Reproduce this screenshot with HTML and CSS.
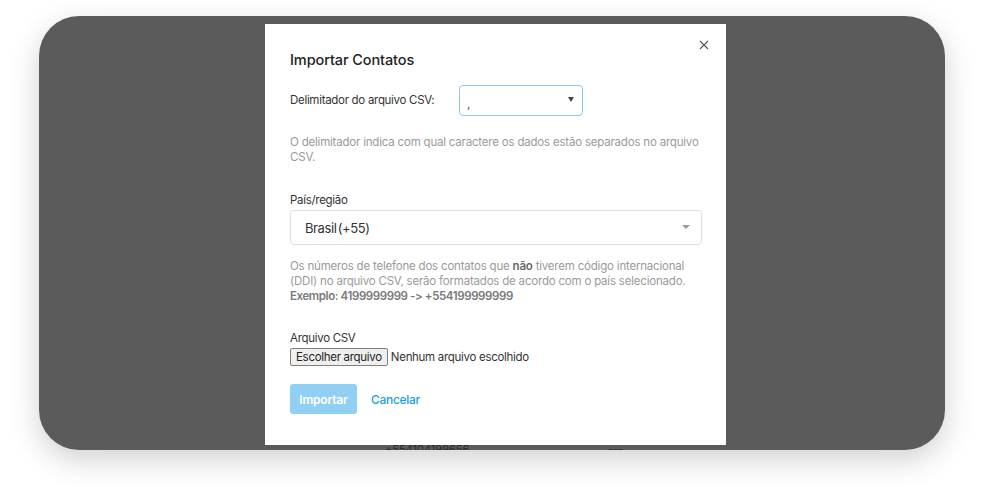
FILE: index.html
```html
<!DOCTYPE html>
<html lang="pt-BR">
<head>
<meta charset="utf-8">
<title>Importar Contatos</title>
<link rel="stylesheet" href="styles.css">
</head>
<body>
<div class="frame">
  <div class="modal">
    <button class="close" aria-label="Fechar">
      <svg width="10" height="10" viewBox="0 0 10 10"><path d="M1 1L9 9M9 1L1 9" stroke="#555" stroke-width="1.1" fill="none"/></svg>
    </button>
    <h2 class="title">Importar Contatos</h2>
    <div class="delim-row">
      <span class="label">Delimitador do arquivo CSV:</span>
      <div class="mini-select">
        <span class="mini-value">,</span>
        <span class="tri"></span>
      </div>
    </div>
    <p class="help help-1">O delimitador indica com qual caractere os dados estão separados no arquivo CSV.</p>
    <div class="field">
      <span class="label">País/região</span>
      <div class="big-select">
        <span class="big-value">Brasil (+55)</span>
        <span class="tri tri-light"></span>
      </div>
    </div>
    <p class="help help-2">Os números de telefone dos contatos que <b class="strong">não</b> tiverem código internacional (DDI) no arquivo CSV, serão formatados de acordo com o país selecionado. <b class="example">Exemplo: 4199999999 -&gt; +554199999999</b></p>
    <div class="field file-field">
      <span class="label">Arquivo CSV</span>
      <div class="file-row">
        <span class="file-btn">Escolher arquivo</span>
        <span class="file-name">Nenhum arquivo escolhido</span>
      </div>
    </div>
    <div class="actions">
      <button class="btn-primary">Importar</button>
      <button class="btn-link">Cancelar</button>
    </div>
  </div>
  <div class="behind">
    <span class="behind-phone">+554104199656</span>
    <span class="behind-dash">---</span>
  </div>
</div>
</body>
</html>
```

FILE: styles.css
```css
* { box-sizing: border-box; }
html, body { margin: 0; padding: 0; background: #ffffff; }
body {
  font-family: Inter, "Noto Sans", "Liberation Sans", sans-serif;
  font-feature-settings: "calt" 0, "liga" 0;
  font-variant-ligatures: none;
  width: 989px;
  height: 497px;
  overflow: hidden;
  padding-top: 16px;
  padding-left: 39px;
}
.frame {
  width: 906px;
  height: 434px;
  background: #5b5b5b;
  border-radius: 40px;
  box-shadow: 0 10px 30px rgba(0,0,0,0.18);
  overflow: hidden;
  padding-top: 8px;
  padding-left: 226px;
  display: flex;
  flex-direction: column;
}
.modal {
  position: relative;
  width: 461px;
  height: 421px;
  flex: none;
  background: #fff;
  padding: 0 24px 0 25px;
  display: flex;
  flex-direction: column;
  color: #333;
}
.close {
  position: absolute;
  top: 15px;
  right: 16px;
  width: 12px;
  height: 12px;
  padding: 0;
  border: 0;
  background: none;
  display: flex;
  align-items: center;
  justify-content: center;
}
.title {
  margin: 27px 0 0;
  font-size: 14.5px;
  font-weight: 500;
  color: #222;
  line-height: 18px;
  letter-spacing: -0.1px;
}
.label {
  font-size: 11.5px;
  line-height: 15px;
  letter-spacing: -0.3px;
  color: #333;
}
.delim-row {
  margin-top: 16px;
  display: flex;
  align-items: center;
}
.delim-row .label { width: 169px; }
.mini-select {
  width: 124px;
  height: 31px;
  border: 1px solid #86c8f2;
  border-radius: 4px;
  display: flex;
  align-items: center;
  justify-content: space-between;
  padding: 0 8px 0 7px;
}
.mini-value { font-size: 12px; color: #555; margin-top: 6px; }
.tri {
  width: 0; height: 0;
  border-left: 3.5px solid transparent;
  border-right: 3.5px solid transparent;
  border-top: 5px solid #444;
  margin-top: -2px;
}
.tri-light { border-top-color: #999; border-left-width: 4px; border-right-width: 4px; border-top-width: 4px; }
.help {
  margin: 0;
  font-size: 11.5px;
  line-height: 15px;
  letter-spacing: -0.2px;
  color: #9a9a9a;
}
.help-1 { margin-top: 19px; }
.field { display: flex; flex-direction: column; }
.field:not(.file-field) { margin-top: 28px; }
.big-select {
  margin-top: 2px;
  width: 412px;
  height: 35px;
  border: 1px solid #dedede;
  border-radius: 4px;
  display: flex;
  align-items: center;
  justify-content: space-between;
  padding: 0 11px 0 14px;
}
.big-value { font-size: 13px; letter-spacing: -0.4px; word-spacing: -2px; color: #333; }
.help-2 { margin-top: 14px; }
.help-2 .strong { font-weight: 600; color: #666; }
.help-2 .example { font-weight: 600; color: #7a7a7a; letter-spacing: -0.4px; }
.file-field { margin-top: 27px; }
.file-row {
  margin-top: 2px;
  display: flex;
  align-items: center;
  gap: 3px;
  font-size: 11.5px;
  letter-spacing: -0.3px;
  color: #333;
}
.file-btn {
  display: inline-block;
  padding: 1px 5px;
  border: 1px solid #808080;
  border-radius: 2px;
  background: #efefef;
  line-height: 14px;
  color: #222;
}
.actions {
  margin-top: 18px;
  display: flex;
  align-items: center;
  gap: 14px;
}
.btn-primary {
  width: 67px;
  height: 30px;
  border: 0;
  border-radius: 3px;
  background: #91d0f5;
  color: #fff;
  font-family: inherit;
  font-size: 12px;
  font-weight: 600;
  letter-spacing: -0.2px;
  padding: 0;
}
.btn-link {
  border: 0;
  background: none;
  padding: 0;
  font-family: inherit;
  font-size: 12px;
  letter-spacing: -0.3px;
  color: #1a9fdf;
  font-weight: 500;
}
.behind {
  position: relative;
  height: 6px;
  font-size: 11px;
  color: #2a2a2a;
  line-height: 11px;
}
.behind-phone { position: absolute; left: 120px; top: -1px; }
.behind-dash { position: absolute; left: 343px; top: -1px; }
```
